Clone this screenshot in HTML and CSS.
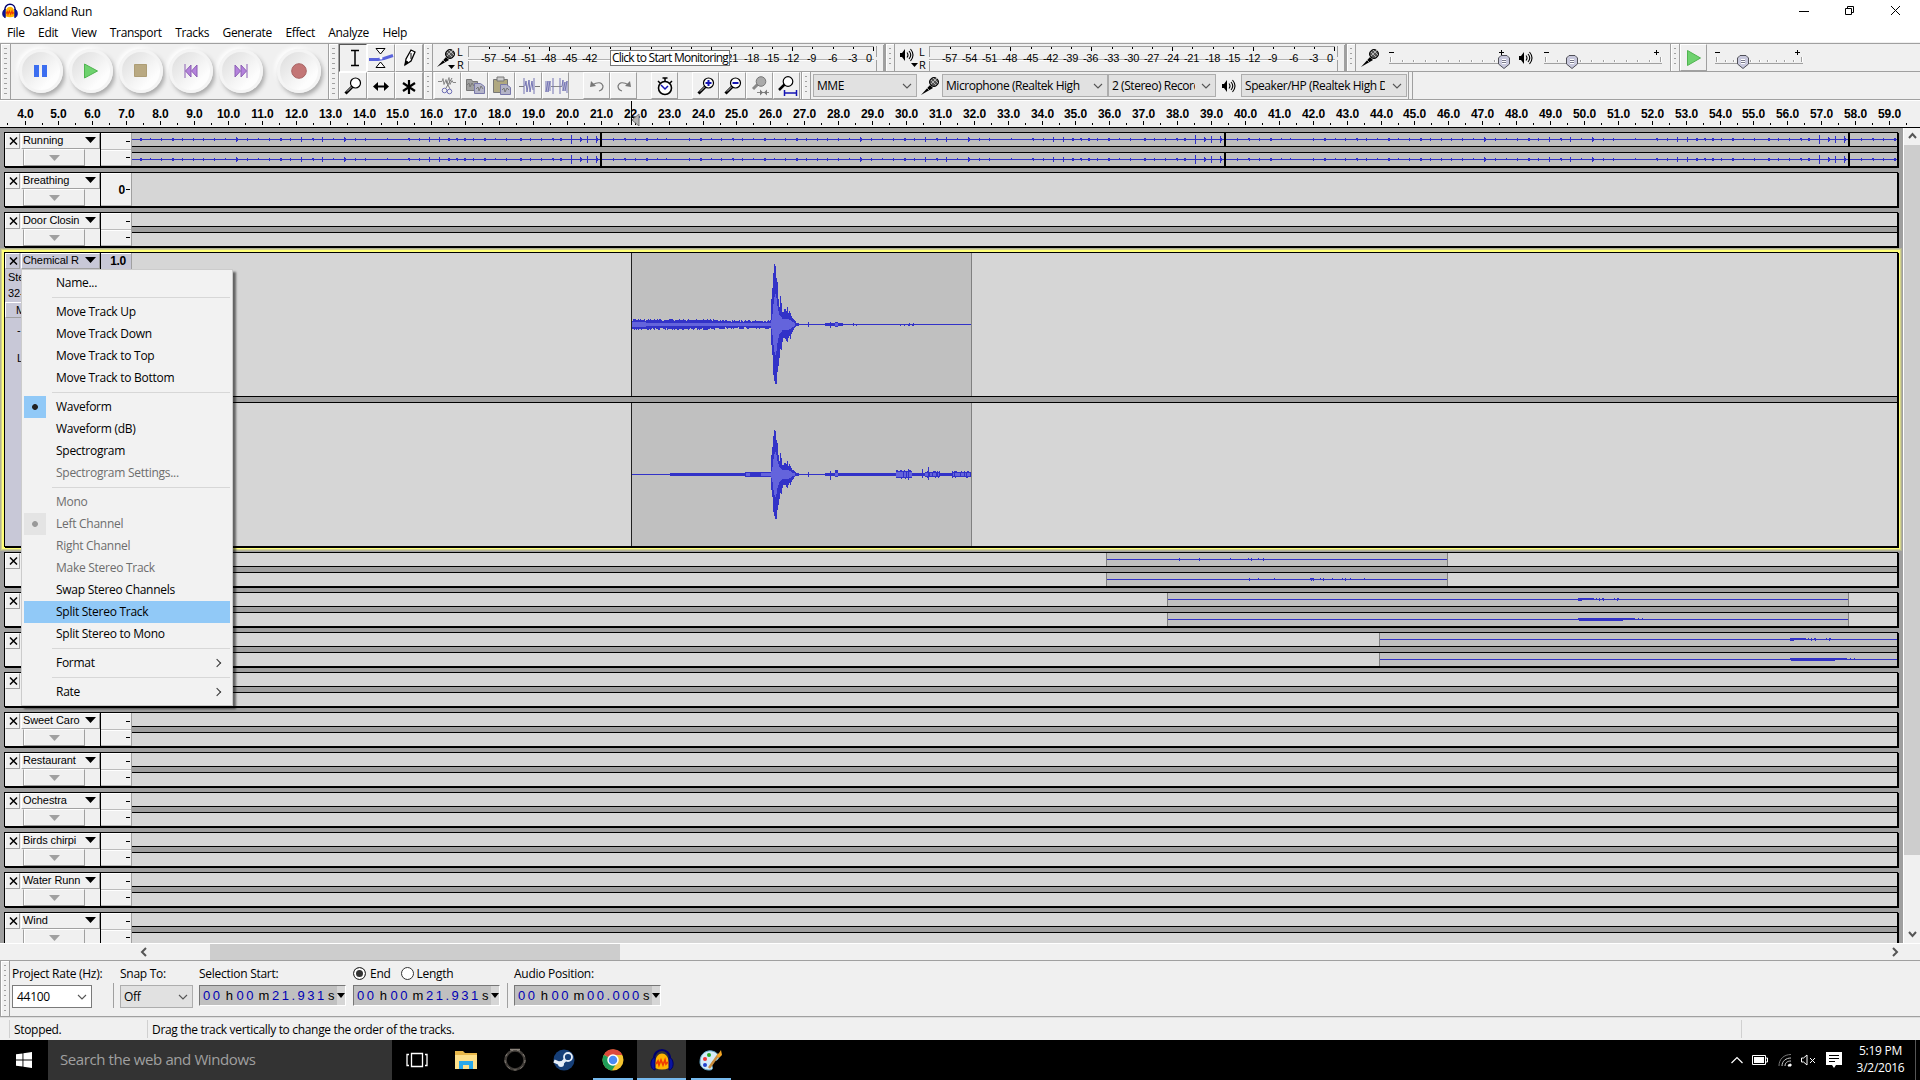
FILE: index.html
```html
<!DOCTYPE html>
<html lang="en">
<head>
  <meta charset="UTF-8">
  <title>Oakland Run</title>
  <link rel="stylesheet" href="styles.css">
</head>
<body>
  <svg class="defs" width="0" height="0">
    <defs>
      <symbol id="mic" viewBox="0 0 20 20">
        <path d="M1 19L10 9l3 3L1 19z" fill="#000"/>
        <path d="M7 12l2 2" stroke="#999"/>
        <circle cx="14" cy="6" r="4.5" fill="#555" stroke="#000"/>
        <path d="M11 4l5 5M13 2l5 5M11 8l6-6" stroke="#ccc" stroke-width=".8"/>
      </symbol>
      <symbol id="speaker" viewBox="0 0 14 14">
        <path d="M0 5h2l3-4v12L2 9H0z" fill="#000"/>
        <path d="M7 4.500q2 2.500 0 5M9 3q3.500 4 0 8M10.500 1q5 6 0 12" fill="none" stroke="#000" stroke-width="1.100"/>
      </symbol>
      <symbol id="lens" viewBox="0 0 20 20">
        <path d="M1.500 17.500L9 10" stroke="#000" stroke-width="3"/>
        <path d="M3 15.500L9 9.500" stroke="#ccc"/>
        <circle cx="11.500" cy="7" r="5" fill="#fff" stroke="#000" stroke-width="1.200"/>
      </symbol>
      <symbol id="thumb" viewBox="0 0 12 14">
        <path d="M3 .5h6l2.500 2.500v6L6 13.500.5 9V3z" fill="#c8c8dc" stroke="#505058"/>
        <path d="M4 4.500h4M4 6.500h4M4 8.500h4" stroke="#fff"/><path d="M4 5.500h4M4 7.500h4" stroke="#778"/>
      </symbol>
      <symbol id="audacity" viewBox="0 0 24 24">
        <path d="M5 20C4 10 8 5.500 12 5.500S20 10 19 20q-7 3-14 0z" fill="#ffb400"/>
        <path d="M4 11C4-1 20-1 20 11" fill="none" stroke="#00006e" stroke-width="2.200"/>
        <path d="M5 9v13C0 22-1 11 5 9zM19 9v13c5 0 6-11 0-13z" fill="#0a14a0" stroke="#000064"/>
        <path d="M6 16l2-3 1 4 2-5 2 5 2-5 1 4 2-2" fill="none" stroke="#f03c00" stroke-width="1.700"/>
      </symbol>
      <symbol id="caret" viewBox="0 0 10 6"><path d="M1 1l4 4 4-4" fill="none" stroke="#555" stroke-width="1.100"/></symbol>
    </defs>
  </svg>

  <header class="titlebar">
    <svg class="app-icon" width="16" height="16"><use href="#audacity"/></svg>
    <span class="title">Oakland Run</span>
    <svg class="win-controls" width="102" height="12" viewBox="0 0 102 12" fill="none" stroke="#000">
      <path d="M0 6.500h10M46.500 3.500h6v6h-6zM48.500 3.500v-2h6v6h-2M92 1l9 9M101 1l-9 9"/>
    </svg>
  </header>
  <nav class="menubar">
    <span>File</span><span>Edit</span><span>View</span><span>Transport</span><span>Tracks</span><span>Generate</span><span>Effect</span><span>Analyze</span><span>Help</span>
  </nav>

  <section class="toolbars">
    <div class="grip tall"></div>
    <div class="transport">
      <div class="round"><svg width="16" height="14"><path d="M1 1h5v12H1zM9 1h5v12H9z" fill="#3c6ef0"/></svg></div>
      <div class="round"><svg width="16" height="16"><path d="M1.500 1l13 7-13 7z" fill="#6ed26e" stroke="#50b450"/></svg></div>
      <div class="round"><svg width="14" height="14"><path d="M.5.5h12v12H.5z" fill="#b9a982" stroke="#ad9d75"/></svg></div>
      <div class="round"><svg width="14" height="14"><path d="M1 0v14M7 1v12L1.500 7zM13 1v12L7.500 7z" fill="#b482dc" stroke="#8c5fb4"/></svg></div>
      <div class="round"><svg width="14" height="14"><path d="M13 0v14M7 1v12l5.500-6zM1 1v12l5.500-6z" fill="#b482dc" stroke="#8c5fb4"/></svg></div>
      <div class="round record"><svg width="16" height="16"><circle cx="8" cy="8" r="7.300" fill="#c37676" stroke="#a86464"/></svg></div>
    </div>
    <div class="grip tall"></div>
    <div class="tools">
      <div class="tool pressed"><svg width="26" height="26"><path d="M11 5.500h8M11 20.500h8M15 6v15" stroke="#000" stroke-width="1.500"/></svg></div>
      <div class="tool"><svg width="26" height="26"><path d="M1 14.500h9l6-1 9-3" stroke="#5a64dc" stroke-width="3" fill="none"/><path d="M8 3.500h9L12.500 9zM8 22.500h9L12.500 17z" fill="#fff" stroke="#000"/><circle cx="13" cy="13" r="1.500" fill="#fff"/></svg></div>
      <div class="tool"><svg width="26" height="26"><path d="M9 20l1-6 5-9 4 2-4 9z" fill="#fff" stroke="#000" stroke-width="1.300"/><path d="M9 20l1-4 2 1zM15 8v6" fill="#000" stroke="#000"/></svg></div>
      <div class="tool"><svg width="18" height="20"><use href="#lens" width="20" height="20"/></svg></div>
      <div class="tool"><svg width="26" height="26"><path d="M7 13.500h12" stroke="#000" stroke-width="2"/><path d="M5 13.500L10 9v9zM21 13.500L16 9v9z"/></svg></div>
      <div class="tool"><svg width="26" height="26"><path d="M13 7v14M7 10l12 8M19 10L7 18" stroke="#000" stroke-width="2.200"/></svg></div>
    </div>
    <div class="toolbar-rows">
      <div class="toolbar-row">
        <div class="grip"></div>
        <div class="meter" data-hide="-39 -36 -33 -30 -27 -24">
          <svg class="meter-icon" width="20" height="20"><use href="#mic"/><path d="M12 17h7l-3.500 4z"/></svg>
          <div class="channels"><span>L</span><span>R</span></div>
          <div class="scale"></div>
          <div class="tooltip">Click to Start Monitoring</div>
        </div>
        <div class="grip"></div>
        <div class="meter playback">
          <svg class="meter-icon" width="14" height="14"><use href="#speaker"/><path d="M11 15h7l-3.500 4z"/></svg>
          <div class="channels"><span>L</span><span>R</span></div>
          <div class="scale"></div>
        </div>
        <div class="grip"></div>
        <div class="mixer">
          <svg width="20" height="20"><use href="#mic"/></svg>
          <svg class="slider" data-length="118" data-value="115" data-ticks="10" width="121" height="26"></svg>
          <svg width="14" height="14"><use href="#speaker"/></svg>
          <svg class="slider output-slider" data-length="118" data-value="28" data-ticks="10" width="121" height="26"></svg>
        </div>
        <div class="grip"></div>
        <div class="tool play"><svg width="18" height="18"><path d="M2.500 1.500l13 7.500-13 7.500z" fill="#6ed26e" stroke="#50b450"/></svg></div>
        <svg class="slider speed" data-length="88" data-value="28" data-ticks="10" width="94" height="26"></svg>
      </div>
      <div class="toolbar-row second">
        <div class="grip"></div>
        <div class="edit-tools">
          <div class="tool"><svg width="26" height="26"><path d="M3 8.500h4l1-3 1 6 2-5 1 4 2-6 1 7 2-4 1 2h3" fill="none" stroke="#888"/><path d="M17 5l-6 10M11 8l4 8" stroke="#777" fill="none"/><circle cx="9.500" cy="17.500" r="2.300" fill="none" stroke="#6e6eb4"/><circle cx="14.500" cy="18.500" r="2.300" fill="none" stroke="#6e6eb4"/></svg></div>
          <div class="tool"><svg width="26" height="26"><path d="M4.500 6.500h5l1 2h5v9h-11z" fill="#a0a0a0" stroke="#777"/><path d="M12.500 10.500h6l4 3v7h-10z" fill="#b4b4c8" stroke="#7878aa"/><path d="M5 12l2-2 1 4 2-4 2 3M14 16l2-2 1 4 2-5 2 3" fill="none" stroke="#777"/></svg></div>
          <div class="tool"><svg width="26" height="26"><path d="M4.500 6.500h14v13h-14z" fill="#b0a880" stroke="#777"/><path d="M8 4h7v4H8z" fill="#ccc" stroke="#777"/><path d="M11.500 11.500h6l4 3v7h-10z" fill="#b4b4c8" stroke="#7878aa"/><path d="M13 17l2-2 1 4 2-4 2 2" fill="none" stroke="#777"/></svg></div>
          <div class="tool"><svg width="26" height="26"><path d="M3 13.500h5M19 13.500h5" stroke="#777"/><path d="M8 5v16M18 5v16M9 13l1-5 1 11 2-12 1 12 2-11 1 9" fill="none" stroke="#7474b4"/></svg></div>
          <div class="tool"><svg width="26" height="26"><path d="M8 13.500h11" stroke="#888"/><path d="M3 8v11l2-11v11l2-11v10M10 5v16M17 5v16M19 13l1-6v11l2-9v9l2-10v12" fill="none" stroke="#7474b4"/></svg></div>
          <div class="tool gap"><svg width="26" height="26"><path d="M8 12q9-5 11 1 0 4-4 5" fill="none" stroke="#777" stroke-width="1.200"/><path d="M6 14l1-6 5 5z" fill="#777"/></svg></div>
          <div class="tool"><svg width="26" height="26"><path d="M18 12q-9-5-11 1 0 4 4 5" fill="none" stroke="#777" stroke-width="1.200"/><path d="M20 14l-1-6-5 5z" fill="#777"/></svg></div>
          <div class="tool gap"><svg width="26" height="26"><circle cx="13" cy="15" r="6.500" fill="#fff" stroke="#000" stroke-width="1.600"/><path d="M13 8V5M10.500 5h5M6 8l2 2M20 8l-2 2" stroke="#000" stroke-width="1.500"/><path d="M9 12l4 4 3-3" fill="none" stroke="#1414b4" stroke-width="1.500"/></svg></div>
          <div class="tool gap"><svg width="18" height="20"><use href="#lens" width="20" height="20"/><path d="M8.500 7h6M11.500 4v6" stroke="#1414b4" stroke-width="2"/></svg></div>
          <div class="tool"><svg width="18" height="20"><use href="#lens" width="20" height="20"/><path d="M8.500 7h6" stroke="#1414b4" stroke-width="2"/></svg></div>
          <div class="tool"><svg width="26" height="26"><path d="M6 16l6-6" stroke="#888" stroke-width="3"/><circle cx="14" cy="8.500" r="4.800" fill="#aaa" stroke="#777"/><path d="M10 19.500h12" stroke="#888"/><path d="M16 19.500l-3-3v6zM17 19.500l3-3v6z" fill="#777"/></svg></div>
          <div class="tool"><svg width="26" height="26"><path d="M5 17l7-7" stroke="#000" stroke-width="2.500"/><circle cx="14" cy="8.500" r="4.800" fill="#fff" stroke="#000" stroke-width="1.200"/><path d="M10.500 17v6M22.500 17v6M11 20h11" stroke="#1414b4" stroke-width="1.500"/></svg></div>
        </div>
        <div class="grip"></div>
        <div class="device">
          <div class="select host">MME<svg width="10" height="6"><use href="#caret"/></svg></div>
          <svg class="mic" width="20" height="20"><use href="#mic"/></svg>
          <div class="select input"><span>Microphone (Realtek High</span><svg width="10" height="6"><use href="#caret"/></svg></div>
          <div class="select chan"><span>2 (Stereo) Recording</span><svg width="10" height="6"><use href="#caret"/></svg></div>
          <svg class="spk" width="14" height="14"><use href="#speaker"/></svg>
          <div class="select output"><span>Speaker/HP (Realtek High Definition)</span><svg width="10" height="6"><use href="#caret"/></svg></div>
        </div>
      </div>
    </div>
  </section>

  <div class="timeline"><svg id="timeline" width="1920" height="26"></svg></div>

  <main class="workspace">
    <div class="tracks" id="tracks"></div>
    <div class="vscroll">
      <svg width="17" height="17"><path d="M5 10l3.500-4 3.500 4" fill="none" stroke="#555" stroke-width="2"/></svg>
      <div class="vthumb"></div>
      <svg class="down" width="17" height="17"><path d="M5 6l3.500 4L12 6" fill="none" stroke="#555" stroke-width="2"/></svg>
    </div>
  </main>
  <div class="hscroll">
    <svg width="17" height="17"><path d="M11 4L7 8l4 4" fill="none" stroke="#555" stroke-width="2"/></svg>
    <div class="hthumb"></div>
    <svg class="right" width="17" height="17"><path d="M7 4l4 4-4 4" fill="none" stroke="#555" stroke-width="2"/></svg>
  </div>

  <footer class="selection-bar">
    <div class="grip tall"></div>
    <div class="field rate"><label>Project Rate (Hz):</label><div class="select white">44100<svg width="10" height="6"><use href="#caret"/></svg></div></div>
    <div class="divider"></div>
    <div class="field snap"><label>Snap To:</label><div class="select">Off<svg width="10" height="6"><use href="#caret"/></svg></div></div>
    <div class="field time"><label>Selection Start:</label><div class="clock"><b>00</b><i>h</i><b>00</b><i>m</i><b>21.931</b><i>s</i><span class="drop"></span></div></div>
    <div class="field time"><label><span class="radio on"></span>End<span class="radio"></span>Length</label><div class="clock"><b>00</b><i>h</i><b>00</b><i>m</i><b>21.931</b><i>s</i><span class="drop"></span></div></div>
    <div class="divider"></div>
    <div class="field time"><label>Audio Position:</label><div class="clock"><b>00</b><i>h</i><b>00</b><i>m</i><b>00.000</b><i>s</i><span class="drop"></span></div></div>
  </footer>
  <div class="statusbar"><span class="state">Stopped.</span><span class="hint">Drag the track vertically to change the order of the tracks.</span><span class="rest"></span></div>

  <div class="taskbar">
    <div class="start"><svg width="16" height="16" fill="#fff"><path d="M0 2.300L6.500 1.400v6.200H0zM7.400 1.300L16 0v7.600H7.400zM0 8.400h6.500v6.200L0 13.700zM7.400 8.400H16V16l-8.600-1.300z"/></svg></div>
    <div class="search">Search the web and Windows</div>
    <div class="task"><svg width="22" height="16" fill="none" stroke="#fff" stroke-width="1.300"><path d="M5.500 1.500h11v13h-11zM3 2.500H1v11h2M19 2.500h2v11h-2"/></svg></div>
    <div class="task"><svg width="24" height="22"><path d="M1 2h8l2 2h12v16H1z" fill="#e8b84a"/><path d="M1 6h22v14H1z" fill="#fde08a"/><path d="M5 20v-8h14v8h-4v-4H9v4z" fill="#28a8ea"/></svg></div>
    <div class="task"><svg width="24" height="24"><circle cx="12" cy="12" r="9.500" fill="none" stroke="#403c38" stroke-width="2.500"/><circle cx="12" cy="12" r="10" fill="none" stroke="#8a837b" stroke-dasharray="3 4"/><path d="M7 1.500h10" stroke="#8a837b" stroke-width="1.500"/></svg></div>
    <div class="task"><svg width="24" height="24"><circle cx="12" cy="12" r="10.500" fill="#163f78"/><path d="M2 13l7 3 6-6" stroke="#e6eef8" stroke-width="3.500" fill="none"/><circle cx="16" cy="9" r="4" fill="#163f78" stroke="#e6eef8" stroke-width="1.800"/><circle cx="9" cy="16" r="3" fill="#e6eef8"/></svg></div>
    <div class="task open"><svg width="24" height="24"><circle cx="12" cy="12" r="10.500" fill="#f4c430"/><path d="M12 12L2.900 6.700A10.500 10.500 0 0 1 21.500 7H12z" fill="#dc4a3c"/><path d="M12 12L2.900 6.700A10.500 10.500 0 0 0 11 22.500l5-8z" fill="#1f9d58"/><circle cx="12" cy="12" r="5" fill="#4a8af4" stroke="#fff" stroke-width="1.500"/></svg></div>
    <div class="task open active"><svg width="24" height="24"><use href="#audacity"/></svg></div>
    <div class="task open"><svg width="24" height="24"><path d="M1 14C1 5 8 2 13 3s8 5 6 8-5 0-6 4 3 7-3 7-9-4-9-8z" fill="#d4ecf7" stroke="#6aaed0"/><circle cx="6" cy="11" r="2" fill="#e33"/><circle cx="10" cy="7" r="2" fill="#2a2"/><circle cx="6" cy="17" r="2" fill="#24c"/><path d="M10 20L20 6" stroke="#c98c3c" stroke-width="2.500"/><path d="M18 8l4-6 1 5-3 3z" fill="#f5a623"/></svg></div>
    <div class="tray">
      <svg width="12" height="8"><path d="M.5 7L6 1.500 11.500 7" fill="none" stroke="#fff" stroke-width="1.200"/></svg>
      <svg width="16" height="10"><path d="M.5.5h13v9H.5zM14 3h1.500v4H14" fill="none" stroke="#fff"/><path d="M2 2h10v6H2z" fill="#fff"/></svg>
      <svg width="14" height="14" fill="none" stroke="#ccc"><path d="M1 13C1 6 6 1.500 13 1.500" stroke="#777"/><path d="M4 13c0-5 4-8 9-8M7 13c0-3 2-5 6-5"/><path d="M10 13q0-2 3-2v2z" fill="#fff" stroke="#fff"/></svg>
      <svg width="15" height="12" fill="none" stroke="#fff"><path d="M.5 4h2L6 1v10L2.500 8h-2zM9 4l5 5M14 4L9 9"/></svg>
      <svg width="16" height="16"><path d="M0 0h16v13h-6l-2 3-2-3H0z" fill="#fff"/><path d="M3 3.500h10M3 6.500h10M3 9.500h6" stroke="#000"/></svg>
      <div class="datetime"><span>5:19 PM</span><span>3/2/2016</span></div>
    </div>
  </div>

  <ul class="context-menu">
    <li>Name...</li>
    <li class="sep"></li>
    <li>Move Track Up</li>
    <li>Move Track Down</li>
    <li>Move Track to Top</li>
    <li>Move Track to Bottom</li>
    <li class="sep"></li>
    <li class="checked">Waveform</li>
    <li>Waveform (dB)</li>
    <li>Spectrogram</li>
    <li class="disabled">Spectrogram Settings...</li>
    <li class="sep"></li>
    <li class="disabled">Mono</li>
    <li class="disabled checked">Left Channel</li>
    <li class="disabled">Right Channel</li>
    <li class="disabled">Make Stereo Track</li>
    <li>Swap Stereo Channels</li>
    <li class="hover">Split Stereo Track</li>
    <li>Split Stereo to Mono</li>
    <li class="sep"></li>
    <li class="sub">Format</li>
    <li class="sep"></li>
    <li class="sub">Rate</li>
  </ul>
  <script src="script.js"></script>
</body>
</html>
```
FILE: styles.css
```css
* { box-sizing: border-box; }
body { margin: 0; width: 1920px; height: 1080px; overflow: hidden; background: #f0f0f0; font-family: "Open Sans", sans-serif; font-size: 12px; letter-spacing: -0.27px; color: #000; display: flex; flex-direction: column; position: relative; }
svg { display: block; flex: none; }
.defs { position: absolute; }

.titlebar { height: 22px; flex: none; background: #fff; display: flex; align-items: center; padding: 0 19px 0 2px; }
.title { margin-left: 5px; flex: 1; padding-top: 1px; }
.menubar { height: 20px; flex: none; background: #fff; display: flex; padding: 2px 0 0 7px; gap: 13.5px; line-height: 17px; letter-spacing: -0.35px; }

.toolbars { height: 58px; flex: none; display: flex; margin-top: 1px; border-bottom: 1px solid #fff; }
.toolbars > * { border-top: 1px solid #a0a0a0; border-bottom: 1px solid #a0a0a0; }
.grip { width: 11px; flex: none; border-left: 1px solid #a0a0a0; border-right: 1px solid #a0a0a0; padding: 4px 3px; display: flex; box-shadow: inset 1px 1px #fff; }
.grip::before { content: ""; flex: 1; background: repeating-linear-gradient(#a0a0a0 0 1px, transparent 1px 5px); }
.transport { width: 317px; flex: none; display: flex; align-items: center; padding: 0 0 1px 8px; gap: 6px; }
.round { width: 44px; height: 44px; border-radius: 50%; background: linear-gradient(135deg, #dcdcdc, #fdfdfd 75%); border: 3px solid #f4f4f4; box-shadow: 2px 3px 4px #aaa, -2px -2px 4px #fff; display: flex; align-items: center; justify-content: center; }
.round.record { margin-left: 8px; }
.tools { width: 84px; flex: none; display: grid; grid-template-columns: repeat(3, 28px); grid-template-rows: 28px 27px; }
.tool { width: 27px; border-left: 1px solid #fff; border-top: 1px solid #fff; border-right: 1px solid #a0a0a0; border-bottom: 1px solid #a0a0a0; display: flex; align-items: center; justify-content: center; overflow: hidden; }
.tools .tool { width: 28px; }
.tool.pressed { border-color: #555 #fff #fff #555; }
.toolbars .toolbar-rows { flex: 1; border: 0; display: flex; flex-direction: column; }
.toolbar-row { height: 29px; flex: none; display: flex; border-top: 1px solid #a0a0a0; border-bottom: 1px solid #a0a0a0; }
.toolbar-row.second { height: 28px; border-top: 0; }
.toolbar-row .grip { width: 10px; }

.meter { width: 452px; display: flex; align-items: center; position: relative; flex: none; padding-left: 3px; border-right: 1px solid #a0a0a0; }
.meter::after { content: ""; width: 4px; height: 26px; border-right: 1px solid #a0a0a0; }
.meter.playback { width: 451px; padding-left: 5px; }
.meter-icon { overflow: visible; }
.channels { display: flex; flex-direction: column; font-size: 11px; line-height: 13px; width: 11px; margin: 0 0 0 1px; }
.playback .channels { margin-left: 5px; width: 10px; }
.playback .meter-icon { width: 14px; margin-top: -5px; }
.scale { width: 411px; height: 26px; }
.tooltip { position: absolute; left: 177px; top: 6px; width: 120px; height: 16px; background: #fff; border: 1px solid #777; line-height: 14px; text-align: center; white-space: nowrap; letter-spacing: -0.75px; z-index: 2; }
.small { font: 11px "Liberation Sans", Arial, sans-serif; }
.mixer { width: 314px; flex: none; display: flex; align-items: center; padding-left: 4px; gap: 9px; }
.output-slider { margin-left: 2px; }
.speed { margin: 1px 0 0 8px; }

.edit-tools { width: 368px; display: flex; flex: none; }
.edit-tools .tool:first-child { margin-left: 1px; }
.edit-tools .gap { margin-left: 14px; }
.edit-tools .tool { flex: none; }
.device { display: flex; align-items: center; padding-left: 2px; width: 602px; border-right: 1px solid #a0a0a0; box-shadow: inset -3px 0 #f0f0f0, inset -4px 0 #a0a0a0; }
.select { height: 23px; background: #e1e1e1; border: 1px solid #adadad; display: flex; align-items: center; justify-content: space-between; padding: 0 4px 0 3px; overflow: hidden; white-space: nowrap; }
.device .select { letter-spacing: -0.45px; }
.select span { overflow: hidden; }
.host { width: 104px; }
.mic { margin: 0 2px 0 3px; }
.input { width: 166px; }
.chan { width: 108px; }
.chan span { width: 83px; }
.output { width: 166px; }
.output span { width: 140px; }
.spk { margin: 0 5px 0 6px; }

.timeline { height: 27px; flex: none; border-bottom: 1px solid #000; letter-spacing: -0.1px; }
.timeline text { font: bold 12px "Liberation Sans", Arial, sans-serif; text-anchor: middle; }

.workspace { height: 815px; flex: none; display: flex; }
.tracks { width: 1903px; background: #9f9f9f; padding: 4px; display: flex; flex-direction: column; gap: 5px; overflow: hidden; }
.track { width: 1894px; height: 35px; flex: none; border: 1px solid #000; box-shadow: 1px 1px #000; display: flex; background: #9f9f9f; }
.track.selected { height: 295px; box-shadow: 1px 1px #000, 0 0 0 2px #ffff78, 0 0 0 3px #d2d28c, 0 0 0 4px #b4b496; }
.panel { width: 96px; height: 100%; border-right: 1px solid #000; background: #f0f0f0; font: 11px "Liberation Sans", Arial, sans-serif; letter-spacing: -0.1px; }
.selected .panel, .selected .vruler { background: #c8c8d7; }
.panel-head { display: flex; height: 16px; }
.close { width: 15px; border: 1px solid #fff; border-right-color: #a0a0a0; border-bottom-color: #a0a0a0; }
.name { flex: 1; margin-left: 1px; display: flex; align-items: center; justify-content: space-between; padding: 0 3px 2px 1px; border: 1px solid #fff; border-right-color: #a0a0a0; border-bottom-color: #a0a0a0; white-space: nowrap; line-height: 12px; }
.collapse { width: 62px; height: 17px; margin-left: 18px; border: 1px solid #a0a0a0; border-top-color: #fff; box-shadow: inset 1px 0 #fff; display: flex; align-items: center; justify-content: center; }
.info { padding-left: 3px; line-height: 16px; white-space: nowrap; }
.mute { border: 1px solid #fff; border-bottom: 1px solid #a0a0a0; padding-left: 10px; height: 16px; line-height: 14px; margin-top: 1px; }
.gain { padding: 5px 0 0 12px; line-height: 14px; }
.vruler { width: 31px; border-right: 1px solid #a0a0a0; background: #f0f0f0; display: flex; flex-direction: column; justify-content: space-between; font: bold 12px "Liberation Sans", Arial, sans-serif; text-align: right; }
.vruler div { flex: 1; display: flex; align-items: center; justify-content: flex-end; border-bottom: 1px solid #bbb; border-top: 1px solid #fff; }
.vruler div::after { content: ""; width: 4px; height: 1px; background: #000; margin: 0 1px 0 1px; }
.selected .vruler div { align-items: flex-start; padding: 0 5px 0 0; }
.selected .vruler div::after { display: none; }
.waves { flex: 1; display: flex; flex-direction: column; justify-content: space-between; }
.channel { background: #d6d6d6; }
.channel + .channel { border-top: 1px solid #000; }
.channel:first-child:not(:last-child) { border-bottom: 1px solid #000; }

.vscroll { width: 17px; border-left: 1px solid #fff; display: flex; flex-direction: column; }
.vthumb { height: 710px; background: #cdcdcd; }
.vscroll .down { margin-top: auto; }
.hscroll { height: 17px; flex: none; display: flex; padding-left: 135px; border-top: 1px solid #fff; }
.hthumb { width: 410px; margin-left: 58px; background: #cdcdcd; }
.hscroll .right { margin-left: auto; margin-right: 17px; }

.selection-bar { height: 57px; flex: none; border-top: 1px solid #a0a0a0; border-bottom: 1px solid #a0a0a0; display: flex; }
.selection-bar .grip { width: 10px; margin-right: 2px; }
.field { display: flex; flex-direction: column; flex: none; padding-top: 3px; }
.field label { height: 21px; line-height: 19px; padding-bottom: 2px; white-space: nowrap; display: flex; align-items: center; }
.rate { width: 101px; }
.rate .select { width: 80px; padding-left: 4px; }
.snap { width: 79px; }
.snap .select { width: 73px; }
.select.white { background: #fff; border-color: #7a7a7a; }
.time { width: 154px; }
.divider { width: 1px; height: 25px; margin: 22px 6px 0 0; background: #a0a0a0; }
.radio { width: 13px; height: 13px; border: 1px solid #333; border-radius: 50%; background: #fff; margin-right: 4px; }
.radio.on ~ .radio { margin-left: 10px; margin-right: 3px; }
.radio.on { box-shadow: inset 0 0 0 2px #fff; background: #333; }
.clock { width: 147px; height: 21px; background: #c0c0c0; border: 1px solid #777; border-right-color: #fff; border-bottom-color: #fff; display: flex; align-items: center; padding-left: 3px; font: 13px "Liberation Sans", Arial, sans-serif; letter-spacing: 2.5px; }
.clock > * { flex: none; }
.clock b { font-weight: normal; color: #0000b4; }
.clock i { font-style: normal; width: 14px; text-align: center; letter-spacing: 0; }
.clock i:nth-of-type(2) { width: 16px; }
.clock i:nth-of-type(3) { width: 9px; }
.clock .drop { width: 8px; height: 19px; margin-left: auto; background: #d6d6d6; display: flex; align-items: center; }
.clock .drop::before { content: ""; border: 4px solid transparent; border-top: 5px solid #000; border-bottom: 0; }

.statusbar { height: 23px; flex: none; display: flex; padding: 2px 0 2px 9px; line-height: 20px; border-top: 1px solid #ddd; letter-spacing: -0.32px; }
.statusbar span { border-left: 1px solid #d0d0d0; padding-left: 4px; height: 18px; }
.state { width: 138px; }
.hint { width: 1594px; }

.taskbar { height: 40px; flex: none; background: #000; display: flex; color: #fff; }
.start { width: 48px; display: flex; align-items: center; justify-content: center; }
.search { width: 344px; background: #333; color: #a0a0a0; font-size: 15px; line-height: 39px; padding-left: 12px; letter-spacing: -0.4px; }
.task { width: 49px; display: flex; align-items: center; justify-content: center; position: relative; }
.task.open::after { content: ""; position: absolute; left: 5px; right: 4px; bottom: 0; height: 2px; background: #76b9ed; }
.task.active { background: #333; }
.task.active::after { left: 0; right: 0; }
.tray { margin-left: auto; display: flex; align-items: center; gap: 9.5px; padding-right: 4px; }
.datetime { width: 70px; margin-left: -5px; display: flex; flex-direction: column; text-align: center; line-height: 17px; border-right: 1px solid #555; height: 40px; padding-top: 2px; }

.context-menu { position: absolute; left: 21px; top: 269px; width: 212px; margin: 0; padding: 2px; list-style: none; background: #f2f2f2; border: 1px solid #ccc; box-shadow: 3px 3px 2px #0008; }
.context-menu li { height: 22px; line-height: 22px; padding-left: 32px; position: relative; }
.context-menu li.sep { height: 7px; margin-left: 28px; background: linear-gradient(#d7d7d7, #d7d7d7) 0 3px/100% 1px no-repeat; }
.context-menu .disabled { color: #6d6d6d; }
.context-menu .hover { background: #91c9f7; }
.context-menu .checked::before { content: ""; position: absolute; left: 0; top: 0; width: 22px; height: 22px; background: radial-gradient(circle, #222 2.5px, #91c9f7 3.3px); }
.context-menu .disabled.checked::before { background: radial-gradient(circle, #999 2.5px, #e4e4e4 3.3px); }
.context-menu .sub::after { content: ""; position: absolute; right: 10px; top: 8px; width: 5px; height: 5px; border: solid #333; border-width: 1px 1px 0 0; transform: rotate(45deg); }
```
FILE: script.js
```javascript
const LEFT = 132;
const WIDTH = 1765;
const OUTER = '#3232c8';
const INNER = '#6464dc';

function rect(x, y, w, h, fill) {
  return `<rect x="${x}" y="${y}" width="${w}" height="${h}" fill="${fill}"/>`;
}

// timeline, one label per second
let ruler = '';
for (let s = 4; s <= 59; s++) {
  const x = Math.round(24.500 + (s - 4) * 33.9);
  ruler += `<text x="${x + 0.5}" y="17">${s}.0</text>` + rect(x, 20, 1, 4, '#000') + rect(x + 17, 22, 1, 2, '#000');
}
ruler += rect(7, 22, 1, 2, '#000') + '<path d="M639 13v12l-7-6z" fill="#b4b4b4" stroke="#777"/>' + rect(631, 0, 1, 24, '#000');
document.getElementById('timeline').innerHTML = ruler;

// level meters
document.querySelectorAll('.meter').forEach(meter => {
  const hide = (meter.dataset.hide || '').split(' ');
  let out = rect(0, 1, 406, 1, '#a0a0a0') + rect(0, 1, 1, 11, '#a0a0a0') + rect(0, 14, 406, 1, '#b0b0b0') + rect(0, 15, 406, 1, '#fff') + rect(0, 16, 1, 10, '#a0a0a0') + rect(408, 1, 1, 11, '#a0a0a0') + rect(408, 15, 1, 11, '#a0a0a0');
  for (let db = -57; db <= 0; db += 3) {
    const x = Math.round(405 + db * 6.74);
    out += rect(x, 2, 1, db % 12 ? 2 : 4, '#000');
    if (!hide.includes(String(db))) {
      out += `<text class="small" x="${db ? x - 0.5 : x - 4}" y="17" text-anchor="middle">${db}</text>`;
    }
  }
  meter.querySelector('.scale').innerHTML = `<svg width="411" height="26">${out}</svg>`;
});

document.querySelectorAll('.slider').forEach(el => {
  const len = +el.dataset.length;
  const n = +el.dataset.ticks;
  let out = rect(0, 7, 5, 1, '#000') + rect(len - 8, 7, 5, 1, '#000') + rect(len - 6, 5, 1, 5, '#000') + rect(0, 18, len, 1, '#a0a0a0');
  for (let i = 0; i <= n; i++) {
    const x = Math.round(1 + i * (len - 3) / n);
    const h = i === 0 || i === n ? 5 : 2;
    out += rect(x, 17 - h, 1, h, '#a0a0a0') + rect(x + 1, 17 - h, 1, h, '#fff');
  }
  out += `<use href="#thumb" x="${el.dataset.value - 6}" y="10" width="12" height="14"/>`;
  el.innerHTML = out;
});

let seed = 7;
function rand() {
  seed = (seed * 16807) % 2147483647;
  return seed / 2147483647;
}

function clip(x0, x1, h) {
  return rect(x0 - LEFT, 0, x1 - x0, h, '#c0c0c0') + rect(x0 - LEFT, 0, 1, h, '#808080') + rect(x1 - LEFT, 0, 1, h, '#808080') + rect(x0 - LEFT + 1, (h - 1) / 2, x1 - x0 - 1, 1, OUTER);
}

function bar(x, mid, up, down, fill) {
  return rect(x - LEFT, mid - up, 1, up + down + 1, fill);
}

// footsteps loop every 624px: offset, height
const STEPS = [13, 24, 35, 46, 47, 57, 66, 89, 100, 111, 121, 132, 142, 153, 164, 174, 185, 196, 206, 217, 227, 238, 249, 260, 271, 282, 293, 304, 314, 325, 336, 346, 357, 368, 379, 389, 411, 432, 443, 453, 463, 472, 480, 488, 497, 508, 519, 530, 544, 554, 565, 576, 584, 595, 604, 611, 620];
const TALL = { 260: 2, 325: 2, 346: 2, 368: 2, 453: 2, 463: 2, 595: 4, 604: 2, 611: 3, 620: 3 };

function running() {
  let out = rect(0, 0, WIDTH, 13, '#c0c0c0') + rect(0, 6, WIDTH, 1, OUTER);
  for (let start = -24; start < 1900; start += 624) {
    STEPS.forEach(s => {
      const a = TALL[s] || 1;
      out += bar(start + s, 6, a, s % 3 || a > 1 ? a : 0, OUTER);
      if (s % 4 === 0) out += bar(start + s + 1, 6, 1, 1, OUTER);
    });
    out += rect(start - LEFT, 0, 2, 13, '#000');
  }
  return out;
}

const UP = [25, 36, 51, 60, 58, 46, 42, 25, 17, 28, 21, 12, 12, 15, 15, 13, 17, 11, 13, 11, 8, 6, 5, 4, 3, 1, 1, 1];
const DOWN = [20, 30, 50, 56, 59, 59, 47, 41, 33, 24, 25, 17, 13, 13, 14, 16, 17, 13, 11, 14, 9, 7, 5, 3, 2, 1, 1, 1];
const RMS = [4, 10, 20, 27, 30, 26, 18, 13, 9, 8, 7, 5, 5, 5, 5, 5, 5, 5, 4, 4, 3, 2, 2, 1, 0, 0, 0, 0];

function chemical(right) {
  const mid = 71;
  let out = clip(631, 971, 143);
  const k = right ? 0.74 : 1;
  for (let x = 632; x < 771; x++) {
    if (!right) {
      const base = x < 715 ? 4 : 3;
      out += bar(x, mid, base + (rand() > 0.7) - (rand() > 0.8), base + (rand() > 0.6) - (rand() > 0.8), OUTER);
      out += bar(x, mid, x < 646 ? 2 : 1, x < 646 ? 2 : 1, INNER);
    } else if (x > 669) {
      const a = x > 744 ? 2 : 1;
      out += bar(x, mid, a, a, OUTER);
      if (x > 760 || (x > 745 && x < 750)) out += bar(x, mid, 1, 1, INNER);
    }
  }
  UP.forEach((u, i) => {
    out += bar(771 + i, mid, Math.round(u * k), Math.round(DOWN[i] * k), OUTER);
    if (RMS[i]) out += bar(771 + i, mid, Math.round(RMS[i] * k), Math.round(RMS[i] * k), INNER);
  });
  out += bar(808, mid, 2, 2, OUTER);
  for (let x = 825; x < 843; x++) {
    out += bar(x, mid, 1, 1, OUTER);
    if (x > 834 && x < 838) out += bar(x, mid, right ? 4 : 2, 2, OUTER) + bar(x, mid, 1, 1, INNER);
  }
  out += bar(830, mid, right ? 3 : 2, right ? 5 : 3, OUTER);
  if (right) {
    for (let x = 843; x < 971; x++) {
      let a = x > 895 && x < 912 ? 3 : x > 951 || (x > 924 && x < 940) ? 2 : 1;
      out += bar(x, mid, a + (a > 1 && rand() > 0.6), a + (a > 1 && rand() > 0.7), OUTER);
      if (a > 1 && rand() > 0.3) out += bar(x, mid, a - 1, a - 1, INNER);
    }
    out += bar(922, mid, 5, 3, OUTER) + bar(928, mid, 7, 5, OUTER) + bar(908, mid, 5, 5, OUTER);
  } else {
    [853, 856, 900, 904, 908, 909, 912, 913].forEach(x => { out += bar(x, mid, x % 2, 1, OUTER); });
  }
  // edit cursor on the clip start
  return out + rect(631 - LEFT, 0, 1, 143, '#202020');
}

function dots(list) {
  return list.map(x => bar(x, 6, 1, x % 2, OUTER)).join('');
}

function burst(x, right) {
  if (!right) return rect(x - LEFT, 5, 16, 2, OUTER) + rect(x - LEFT, 7, 4, 1, OUTER) + dots([x + 6, x + 8, x + 18, x + 21, x + 24, x + 25, x + 36, x + 39, x + 40]);
  return rect(x - LEFT, 5, 57, 2, OUTER) + rect(x - LEFT + 1, 7, 44, 1, OUTER) + dots([x + 60, x + 64]);
}

const tracks = [
  { name: 'Running', draw: running },
  { name: 'Breathing', mono: true },
  { name: 'Door Closin' },
  { name: 'Chemical R', selected: true, draw: chemical },
  { name: '', draw: r => clip(1106, 1447, 13) + dots(r ? [1249, 1258, 1274, 1310, 1311, 1312, 1313, 1320, 1323, 1332, 1342, 1345, 1350, 1364] : [1179, 1199, 1230, 1248, 1251, 1258, 1263]) },
  { name: '', draw: r => clip(1167, 1848, 13) + burst(1578, r) },
  { name: '', draw: r => clip(1379, 1897, 13) + burst(1790, r) },
  { name: '' },
  { name: 'Sweet Caro' },
  { name: 'Restaurant' },
  { name: 'Ochestra' },
  { name: 'Birds chirpi' },
  { name: 'Water Runn' },
  { name: 'Wind' }
];

document.getElementById('tracks').innerHTML = tracks.map(t => {
  const h = t.selected ? 143 : t.mono ? 33 : 13;
  const sides = t.mono ? [false] : [false, true];
  const body = t.selected
    ? '<div class="info">Stereo<br>32-bit</div><div class="mute">Mute</div><div class="gain">-<br><br>L</div>'
    : '<div class="collapse"><svg width="11" height="6"><path d="M0 0h11L5.500 6z" fill="#a0a0a0"/></svg></div>';
  const label = t.selected ? '1.0' : t.mono ? '0' : '';
  return `<div class="track ${t.selected ? 'selected' : ''}">
    <div class="panel">
      <div class="panel-head">
        <div class="close"><svg width="13" height="13"><path d="M4 3.500l7 7M11 3.500l-7 7" stroke="#000" stroke-width="1.500"/></svg></div>
        <div class="name">${t.name}<svg width="11" height="6"><path d="M0 0h11L5.500 6z"/></svg></div>
      </div>
      ${body}
    </div>
    <div class="vruler">${sides.map((r, i) => `<div>${t.selected && i ? '' : label}</div>`).join('')}</div>
    <div class="waves">${sides.map(r => `<div class="channel"><svg width="${WIDTH}" height="${h}">${t.draw ? t.draw(r) : ''}</svg></div>`).join('')}</div>
  </div>`;
}).join('');
```
